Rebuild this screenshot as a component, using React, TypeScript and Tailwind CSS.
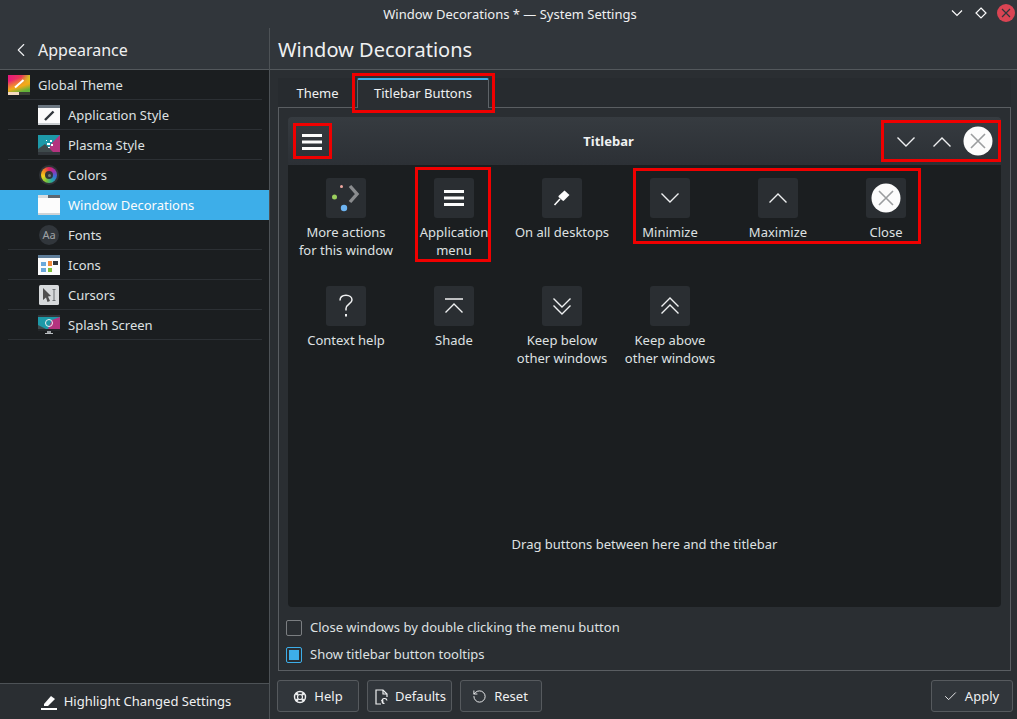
import { ChevronLeft, Check, RotateCcw } from "lucide-react";

const categories = [
  { name: "Global Theme", icon: <GlobalThemeIcon />, top: true },
  { name: "Application Style", icon: <AppStyleIcon /> },
  { name: "Plasma Style", icon: <PlasmaIcon /> },
  { name: "Colors", icon: <ColorsIcon />, noLine: true },
  { name: "Window Decorations", icon: <WindowIcon />, active: true, noLine: true },
  { name: "Fonts", icon: <FontsIcon /> },
  { name: "Icons", icon: <IconsIcon /> },
  { name: "Cursors", icon: <CursorsIcon /> },
  { name: "Splash Screen", icon: <SplashIcon /> },
];

function GlobalThemeIcon() {
  return (
    <svg width="22" height="20" viewBox="0 0 22 20">
      <defs>
        <linearGradient id="gt1" x1="0" y1="0" x2="1" y2="0.2">
          <stop offset="0" stopColor="#e6177f" />
          <stop offset="0.6" stopColor="#ea3a55" />
          <stop offset="1" stopColor="#c8cf25" />
        </linearGradient>
        <linearGradient id="gt2" x1="0.2" y1="0" x2="0.6" y2="1">
          <stop offset="0.25" stopColor="#f5c518" stopOpacity="0" />
          <stop offset="0.7" stopColor="#f5a818" />
          <stop offset="1" stopColor="#62b33a" />
        </linearGradient>
      </defs>
      <rect width="22" height="17" fill="url(#gt1)" />
      <rect width="22" height="17" fill="url(#gt2)" />
      <rect y="17" width="11" height="3" fill="#f6d9c0" />
      <rect x="11" y="17" width="11" height="3" fill="#3a3f35" />
      <path d="M7 12.5 L15.5 5" stroke="#fff" strokeWidth="2" />
    </svg>
  );
}

function AppStyleIcon() {
  return (
    <svg width="22" height="20" viewBox="0 0 22 20">
      <rect width="22" height="20" fill="#fcfcfc" />
      <rect width="22" height="3" fill="#6b7680" />
      <rect y="18" width="22" height="2" fill="#c9cdd0" />
      <path d="M7 15 L15.5 6.5" stroke="#31363b" strokeWidth="2.4" />
    </svg>
  );
}

function PlasmaIcon() {
  return (
    <svg width="22" height="20" viewBox="0 0 22 20">
      <rect width="22" height="17" fill="#1d99a8" />
      <path d="M22 0 V17 H9 L13 9 Z" fill="#b4337f" />
      <path d="M0 17 L0 14 L7 9 L15 17 Z" fill="#3f4a4c" />
      <rect y="17" width="22" height="3" fill="#31363b" />
      <path d="M12 5h2v2h-2zM9 8h3v2H9zM13 9h2v2h-2zM8 5h1v1H8zM10 12h2v1h-2z" fill="#fff" />
    </svg>
  );
}

function ColorsIcon() {
  return (
    <div className="relative w-[20px] h-[20px] rounded-full bg-[#2f3337] flex items-center justify-center">
      <div className="w-[16px] h-[16px] rounded-full bg-[conic-gradient(#e0245e,#9b2fae,#3a6fd8,#27a9a0,#7cc63a,#f2d41e,#f08a1e,#e0245e)] flex items-center justify-center">
        <div className="w-[8px] h-[8px] rounded-full bg-[#31363b] flex items-center justify-center">
          <div className="w-[3px] h-[3px] rounded-full bg-[#777]" />
        </div>
      </div>
    </div>
  );
}

function WindowIcon() {
  return (
    <svg width="22" height="20" viewBox="0 0 22 20">
      <rect width="22" height="20" fill="#fcfcfc" />
      <rect width="22" height="3" fill="#5c6670" />
      <rect width="10" height="3" fill="#d8dcdf" />
      <rect y="18" width="22" height="2" fill="#cfd3d6" />
    </svg>
  );
}

function FontsIcon() {
  return (
    <svg width="20" height="20" viewBox="0 0 20 20">
      <circle cx="10" cy="10" r="10" fill="#31363b" />
      <text x="10" y="14" textAnchor="middle" fontSize="11" fontFamily="'Noto Sans', sans-serif" fill="#9fa3a6">
        Aa
      </text>
    </svg>
  );
}

function IconsIcon() {
  return (
    <svg width="22" height="20" viewBox="0 0 22 20">
      <rect width="22" height="20" fill="#fcfcfc" />
      <rect width="22" height="3" fill="#5e7d99" />
      <rect x="3" y="7" width="5" height="4" fill="#6aa9dc" />
      <rect x="10" y="6" width="4" height="5" fill="#f08a3c" />
      <rect x="15" y="6" width="5" height="4" fill="#31363b" />
      <rect x="3" y="13" width="5" height="4" fill="#6aa9dc" />
      <rect x="10" y="13" width="4" height="4" fill="#7fbf3a" />
    </svg>
  );
}

function CursorsIcon() {
  return (
    <svg width="20" height="20" viewBox="0 0 20 20">
      <rect width="20" height="20" rx="1.5" fill="#d6d9db" />
      <path d="M4 3 L12 11 L9 11.5 L11 16 L8.5 17 L7 12.5 L4 15 Z" fill="#4d4d4d" />
      <path d="M15 5 V15 M13.5 4.5 H16.5 M13.5 15.5 H16.5" stroke="#6b6f72" strokeWidth="1" fill="none" />
    </svg>
  );
}

function SplashIcon() {
  return (
    <svg width="22" height="20" viewBox="0 0 22 20">
      <rect width="22" height="15" fill="#1d99a8" />
      <path d="M22 2 V14 H10 L14 5 Z" fill="#b4337f" />
      <path d="M0 14 L0 10 L8 14 Z" fill="#3f4a4c" />
      <rect width="22" height="2" fill="#31363b" />
      <rect y="14" width="22" height="2" fill="#232629" />
      <circle cx="11" cy="8" r="3.5" stroke="#eff0f1" strokeWidth="1" fill="none" />
      <rect x="9" y="16" width="4" height="2" fill="#9fa3a6" />
      <rect x="7" y="18" width="8" height="1" fill="#bcc0c3" />
    </svg>
  );
}

function Hamburger() {
  return (
    <svg width="20" height="16" viewBox="0 0 20 16" fill="#fcfcfc">
      <rect width="20" height="3" />
      <rect y="6.5" width="20" height="3" />
      <rect y="13" width="20" height="3" />
    </svg>
  );
}

function Chevron({ up }: { up?: boolean }) {
  return (
    <svg width="20" height="12" viewBox="0 0 20 12" fill="none" stroke="#eff0f1" strokeWidth="1.4">
      <path d={up ? "M1.5 10.5 L10 2 L18.5 10.5" : "M1.5 1.5 L10 10 L18.5 1.5"} />
    </svg>
  );
}

function CloseDisc() {
  return (
    <svg width="30" height="30" viewBox="0 0 30 30">
      <circle cx="15" cy="15" r="14.5" fill="#fcfcfc" />
      <path d="M8 8 L22 22 M22 8 L8 22" stroke="#9b9d9f" strokeWidth="1.6" />
    </svg>
  );
}

function MoreActions() {
  return (
    <svg width="28" height="30" viewBox="0 0 28 30">
      <circle cx="9.5" cy="3.5" r="1.5" fill="#f0a8a0" />
      <circle cx="2.5" cy="14" r="2.5" fill="#9bcf5e" />
      <circle cx="12" cy="25" r="3.2" fill="#6db4f2" />
      <path d="M18 3 L25 11 L18 19" stroke="#8a8c8e" strokeWidth="3.4" fill="none" />
    </svg>
  );
}

function Pin() {
  return (
    <svg width="18" height="18" viewBox="0 0 18 18" fill="#fcfcfc">
      <path d="M11.5 1.5 L16.5 6 L10.5 12 L9.5 11.5 L5.5 8 L5.5 7 Z" />
      <path d="M7 10 L1.5 16" stroke="#fcfcfc" strokeWidth="1.6" />
    </svg>
  );
}

function Question() {
  return (
    <svg width="16" height="24" viewBox="0 0 16 24" fill="none" stroke="#eff0f1" strokeWidth="1.5">
      <path d="M2 6.5 C2 3 4.5 1.2 8 1.2 C11.5 1.2 14 3.2 14 6 C14 9.5 8 10.5 8 14.5 V16.5" />
      <path d="M8 20 V22.5" strokeWidth="2" />
    </svg>
  );
}

function Shade() {
  return (
    <svg width="20" height="16" viewBox="0 0 20 16" fill="none" stroke="#eff0f1" strokeWidth="1.4">
      <path d="M1 1 H19 M1.5 14.5 L10 6 L18.5 14.5" />
    </svg>
  );
}

function DoubleChevron({ up }: { up?: boolean }) {
  return (
    <svg width="20" height="18" viewBox="0 0 20 18" fill="none" stroke="#eff0f1" strokeWidth="1.4">
      <path
        d={
          up
            ? "M1.5 9.5 L10 1 L18.5 9.5 M1.5 16.5 L10 8 L18.5 16.5"
            : "M1.5 1.5 L10 10 L18.5 1.5 M1.5 8.5 L10 17 L18.5 8.5"
        }
      />
    </svg>
  );
}

function HelpIcon() {
  return (
    <svg width="14" height="14" viewBox="0 0 14 14" fill="none" stroke="#eff0f1">
      <circle cx="7" cy="7" r="5.5" strokeWidth="1.4" />
      <circle cx="7" cy="7" r="2.5" strokeWidth="1.2" />
      <path d="M3 3 L5 5 M11 3 L9 5 M3 11 L5 9 M11 11 L9 9" strokeWidth="2.4" />
    </svg>
  );
}

function DefaultsIcon() {
  return (
    <svg width="13" height="16" viewBox="0 0 13 16" fill="none" stroke="#eff0f1" strokeWidth="1.2">
      <path d="M6 15 H1 V1 H8 L12 5 V8" />
      <path d="M8 1 V5 H12" />
      <path d="M12 11.5 A2.5 2.5 0 1 0 9.5 14.5 M8 10 L6.8 11.5 L8.6 12.2" />
    </svg>
  );
}

const buttons = [
  { label: "More actions\nfor this window", icon: <MoreActions /> },
  { label: "Application\nmenu", icon: <Hamburger /> },
  { label: "On all desktops", icon: <Pin /> },
  { label: "Minimize", icon: <Chevron /> },
  { label: "Maximize", icon: <Chevron up /> },
  { label: "Close", icon: <CloseDisc /> },
  { label: "Context help", icon: <Question /> },
  { label: "Shade", icon: <Shade /> },
  { label: "Keep below\nother windows", icon: <DoubleChevron /> },
  { label: "Keep above\nother windows", icon: <DoubleChevron up /> },
];

function FooterButton({ icon, label, className }: { icon: React.ReactNode; label: string; className: string }) {
  return (
    <button className={`h-[32px] pt-[1px] flex items-center justify-center gap-[7px] rounded-[3px] border border-[#565a5e] bg-[#31363b] text-[#eff0f1] ${className}`}>
      {icon}
      {label}
    </button>
  );
}

function Highlight({ className }: { className: string }) {
  return <div className={`absolute border-[3px] border-[#f00000] pointer-events-none ${className}`} />;
}

export default function App() {
  return (
    <div className="relative w-[1017px] h-[719px] overflow-hidden flex flex-col bg-[#2a2e32] text-[13px] text-[#eff0f1] font-['Noto_Sans',sans-serif]">
      {/* Window title */}
      <div className="relative h-[28px] shrink-0 flex items-center justify-center pl-[3px] pt-[2px] bg-[#31363b] text-[#eff0f1]">
        Window Decorations * — System Settings
        <div className="absolute right-[2px] top-[4px] flex items-center gap-[12px]">
          <svg width="12" height="8" viewBox="0 0 12 8" fill="none" stroke="#fcfcfc" strokeWidth="1.2">
            <path d="M1 1.5 L6 6.5 L11 1.5" />
          </svg>
          <svg width="12" height="12" viewBox="0 0 12 12" fill="none" stroke="#fcfcfc" strokeWidth="1.2">
            <path d="M6 1 L11 6 L6 11 L1 6 Z" />
          </svg>
          <svg className="-ml-[2px]" width="18" height="18" viewBox="0 0 18 18">
            <circle cx="9" cy="9" r="9" fill="#da4453" />
            <path d="M5 5 L13 13 M13 5 L5 13" stroke="#31363b" strokeWidth="1.2" />
          </svg>
        </div>
      </div>

      <div className="flex flex-1 min-h-0">
        {/* Sidebar */}
        <aside className="w-[270px] shrink-0 flex flex-col border-r border-[#4d5256]">
          <div className="h-[42px] shrink-0 flex items-center pl-[10px] pt-[2px] gap-[6px] bg-[#31363b] border-b border-[#53585c]">
            <ChevronLeft size={22} strokeWidth={1.2} />
            <span className="text-[16px]">Appearance</span>
          </div>
          <div className="flex-1 bg-[#1b1e20]">
            {categories.map((c) => (
              <div
                key={c.name}
                className={`relative h-[30px] flex items-center ${c.top ? "pl-[8px]" : "pl-[38px]"} ${c.active ? "bg-[#3daee9] text-[#fcfcfc]" : ""}`}
              >
                <span className="w-[22px] h-[20px] flex items-center justify-center shrink-0">{c.icon}</span>
                <span className={`ml-[8px] pt-[2px] ${c.active ? "" : "text-[#dfe1e2]"}`}>{c.name}</span>
                {!c.noLine && <div className="absolute left-[8px] right-[7px] bottom-0 h-px bg-[#2c3034]" />}
              </div>
            ))}
          </div>
          <div className="h-[36px] shrink-0 flex items-center justify-center gap-[7px] pl-[3px] border-t border-[#4d5256]">
            <svg width="16" height="16" viewBox="0 0 16 16" fill="#fcfcfc">
              <path d="M3 10 L10 2 L14 5 L7 12 H3 Z" />
              <rect y="14" width="16" height="2" />
            </svg>
            Highlight Changed Settings
          </div>
        </aside>

        {/* Page */}
        <main className="flex-1 min-w-0 flex flex-col">
          <div className="h-[42px] shrink-0 flex items-center pl-[8px] pt-[2px] bg-[#31363b] border-b border-[#53585c] text-[20px]">
            Window Decorations
          </div>

          <div className="flex-1 min-h-0 flex flex-col pl-[8px] pr-[6px] pt-[8px]">
            {/* Tabs */}
            <div className="h-[30px] shrink-0 flex items-end bg-[#272b2f] -mb-px">
              <div className="h-[29px] w-[79px] flex items-center justify-center">Theme</div>
              <div className="relative z-10 h-[30px] w-[132px] flex items-center justify-center rounded-t-[2px] bg-[#2a2e32] border-x border-[#5f6468] border-t-2 border-t-[#3daee9]">
                Titlebar Buttons
              </div>
            </div>

            <div className="h-[564px] shrink-0 flex flex-col border border-[#5a5e62] px-[9px] pt-[9px]">
              {/* Titlebar preview */}
              <div className="h-[48px] shrink-0 flex items-center rounded-t-[4px] bg-gradient-to-b from-[#363b40] to-[#2c3035]">
                <div className="w-[48px] pt-[2px] flex justify-center">
                  <Hamburger />
                </div>
                <div className="flex-1 text-center font-bold text-[13px] text-[#eff0f1] pt-[2px] pr-[15px]">Titlebar</div>
                <div className="flex items-center gap-[16px] pr-[8px]">
                  <div className="pt-[1px]">
                    <Chevron />
                  </div>
                  <div className="pt-[1px]">
                    <Chevron up />
                  </div>
                  <div className="-ml-[5px]">
                    <CloseDisc />
                  </div>
                </div>
              </div>

              {/* Available buttons */}
              <div className="relative h-[442px] shrink-0 rounded-b-[4px] bg-[#1b1e20] pl-[4px] pt-[13px]">
                <div className="grid grid-cols-[repeat(6,108px)] auto-rows-[108px]">
                  {buttons.map((b) => (
                    <div key={b.label} className="flex flex-col items-center">
                      <div className="w-[40px] h-[40px] rounded-[3px] bg-[#2a2e32] flex items-center justify-center">
                        {b.icon}
                      </div>
                      <div className="mt-[5px] text-center leading-[18px] whitespace-pre text-[#dfe1e2]">{b.label}</div>
                    </div>
                  ))}
                </div>
                <div className="absolute left-0 right-0 bottom-[54px] text-center leading-[18px] text-[#dfe1e2]">
                  Drag buttons between here and the titlebar
                </div>
              </div>

              {/* Options */}
              <div className="mt-[13px] flex flex-col gap-[11px] -ml-[2px]">
                <label className="h-[16px] flex items-center gap-[8px] text-[#dfe1e2]">
                  <span className="w-[16px] h-[16px] rounded-[2px] border border-[#7b7e81] bg-[#2a2e32]" />
                  Close windows by double clicking the menu button
                </label>
                <label className="h-[16px] flex items-center gap-[8px] text-[#dfe1e2]">
                  <span className="w-[16px] h-[16px] rounded-[2px] border border-[#3daee9] flex items-center justify-center">
                    <span className="w-[10px] h-[10px] bg-[#3daee9]" />
                  </span>
                  Show titlebar button tooltips
                </label>
              </div>
            </div>

            {/* Footer */}
            <div className="h-[48px] flex items-start gap-[8px] pt-[9px] -ml-[1px] -mr-[2px]">
              <FooterButton className="w-[82px]" icon={<HelpIcon />} label="Help" />
              <FooterButton className="w-[85px] pl-[2px]" icon={<DefaultsIcon />} label="Defaults" />
              <FooterButton className="w-[82px] pr-[2px]" icon={<RotateCcw size={15} strokeWidth={1.5} />} label="Reset" />
              <FooterButton className="w-[82px] ml-auto pr-[2px]" icon={<Check size={15} strokeWidth={1.5} />} label="Apply" />
            </div>
          </div>
        </main>
      </div>

      {/* Red annotations on the screenshot */}
      <Highlight className="left-[352px] top-[73px] w-[143px] h-[40px]" />
      <Highlight className="left-[293px] top-[123px] w-[39px] h-[36px]" />
      <Highlight className="left-[881px] top-[120px] w-[120px] h-[42px]" />
      <Highlight className="left-[415px] top-[167px] w-[76px] h-[95px]" />
      <Highlight className="left-[633px] top-[168px] w-[288px] h-[76px]" />
    </div>
  );
}
